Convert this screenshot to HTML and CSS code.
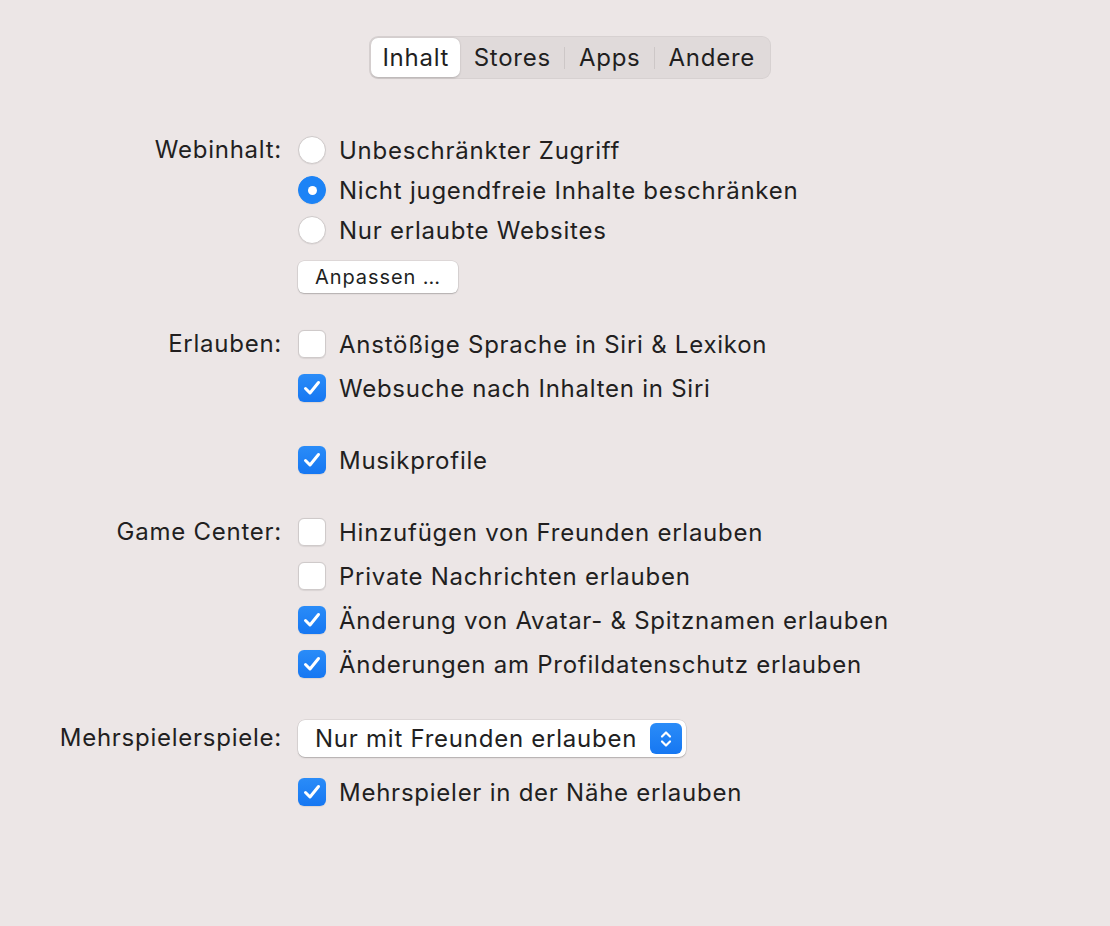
FILE: index.html
```html
<!doctype html>
<html lang="de">
<head>
    <meta charset="UTF-8">
    <title>Bildschirmzeit – Inhalt</title>
    <link rel="stylesheet" href="styles.css">
</head>
<body>
    <div class="tabs">
        <div class="seg">
            <span class="selected">Inhalt</span>
            <span>Stores</span>
            <i class="sep"></i>
            <span>Apps</span>
            <i class="sep"></i>
            <span>Andere</span>
        </div>
    </div>

    <div class="form">
        <!-- Webinhalt -->
        <div class="group web">
            <div class="label">Webinhalt:</div>
            <div class="opts">
                <div class="row r40"><span class="radio"></span>Unbeschränkter Zugriff</div>
                <div class="row r40"><span class="radio on"></span>Nicht jugendfreie Inhalte beschränken</div>
                <div class="row r40"><span class="radio"></span>Nur erlaubte Websites</div>
                <div class="btn">Anpassen …</div>
            </div>
        </div>

        <!-- Erlauben -->
        <div class="group allow">
            <div class="label">Erlauben:</div>
            <div class="opts">
                <div class="row"><span class="check"></span>Anstößige Sprache in Siri &amp; Lexikon</div>
                <div class="row"><span class="check on"><svg viewBox="0 0 28 28"><path d="M7.5 14.5 L12 19 L20.5 8.5"/></svg></span>Websuche nach Inhalten in Siri</div>
                <div class="spacer"></div>
                <div class="row"><span class="check on"><svg viewBox="0 0 28 28"><path d="M7.5 14.5 L12 19 L20.5 8.5"/></svg></span>Musikprofile</div>
            </div>
        </div>

        <!-- Game Center -->
        <div class="group game">
            <div class="label">Game Center:</div>
            <div class="opts">
                <div class="row"><span class="check"></span>Hinzufügen von Freunden erlauben</div>
                <div class="row"><span class="check"></span>Private Nachrichten erlauben</div>
                <div class="row"><span class="check on"><svg viewBox="0 0 28 28"><path d="M7.5 14.5 L12 19 L20.5 8.5"/></svg></span>Änderung von Avatar- &amp; Spitznamen erlauben</div>
                <div class="row"><span class="check on"><svg viewBox="0 0 28 28"><path d="M7.5 14.5 L12 19 L20.5 8.5"/></svg></span>Änderungen am Profildatenschutz erlauben</div>
            </div>
        </div>

        <!-- Mehrspieler -->
        <div class="group multi">
            <div class="label">Mehrspielerspiele:</div>
            <div class="opts">
                <div class="popup">
                    <span>Nur mit Freunden erlauben</span>
                    <span class="stepper">
                        <svg width="14" height="24" viewBox="0 0 14 24">
                            <path d="M3 9.5 L7 5.5 L11 9.5"/>
                            <path d="M3 14.5 L7 18.5 L11 14.5"/>
                        </svg>
                    </span>
                </div>
                <div class="row"><span class="check on"><svg viewBox="0 0 28 28"><path d="M7.5 14.5 L12 19 L20.5 8.5"/></svg></span>Mehrspieler in der Nähe erlauben</div>
            </div>
        </div>
    </div>
</body>
</html>
```

FILE: styles.css
```css
body{
    margin: 0;
    background-color: #ece6e6;
    color: #221f1f;
    font-family: Inter, "Noto Sans", "Liberation Sans", sans-serif;
    font-size: 24px;
    letter-spacing: 0.75px;
    width: 1110px;
    height: 926px;
    overflow: hidden;
}
.tabs{
    display: flex;
    justify-content: center;
    padding-top: 36px;
}
.seg{
    display: flex;
    align-items: center;
    height: 43px;
    padding: 0 2px;
    box-sizing: border-box;
    background-color: #e0dada;
    border-radius: 9px;
    box-shadow: inset 0 0 0 1px rgba(0,0,0,0.04);
    margin-left: 30px;
}
.seg span{
    height: 39px;
    line-height: 39px;
    padding: 0 13.5px;
}
.seg .selected{
    padding: 0 11px;
    background-color: #fff;
    border-radius: 7px;
    box-shadow: 0 0.5px 2px rgba(0,0,0,0.2);
}
.seg .sep{
    width: 1px;
    height: 22px;
    background-color: #cdc7c7;
}
.form{
    padding-top: 51px;
}
.group{
    display: grid;
    grid-template-columns: 282px auto;
    column-gap: 16px;
}
.label{
    text-align: right;
    height: 44px;
    line-height: 44px;
}
.web .label{
    height: 40px;
    line-height: 40px;
}
.row{
    display: flex;
    align-items: center;
    height: 44px;
    white-space: nowrap;
}
.r40{
    height: 40px;
}
.spacer{
    height: 28px;
}
.radio,.check{
    flex: none;
    width: 28px;
    height: 28px;
    margin-right: 13px;
    box-sizing: border-box;
    background-color: #fff;
    border: 1px solid #cfcaca;
    box-shadow: 0 0.5px 1px rgba(0,0,0,0.08);
}
.radio{
    border-radius: 50%;
    position: relative;
}
.check{
    border-radius: 6px;
}
.radio.on{
    background-color: #1c83f6;
    border-color: #1c83f6;
}
.radio.on::after{
    content: "";
    position: absolute;
    left: 8.5px;
    top: 8.5px;
    width: 9px;
    height: 9px;
    border-radius: 50%;
    background-color: #fff;
}
.check.on{
    border: none;
    background: linear-gradient(#2a8cf8, #1677f2);
}
.check svg{
    display: block;
    width: 28px;
    height: 28px;
}
.check path,.stepper path{
    fill: none;
    stroke: #fff;
    stroke-width: 3;
    stroke-linecap: round;
    stroke-linejoin: round;
}
.stepper path{
    stroke-width: 2.2;
}
.btn{
    margin-top: 11px;
    width: 160px;
    height: 32px;
    line-height: 32px;
    text-align: center;
    font-size: 20px;
    letter-spacing: 0.9px;
    background-color: #fff;
    border-radius: 6px;
    box-shadow: 0 0 0 0.5px rgba(0,0,0,0.12), 0 1px 1.5px rgba(0,0,0,0.2);
}
.allow{
    margin-top: 29px;
}
.game{
    margin-top: 28px;
}
.multi{
    margin-top: 32px;
}
.multi .label{
    height: 40px;
    line-height: 40px;
}
.popup{
    margin-top: 2px;
    display: flex;
    align-items: center;
    justify-content: space-between;
    width: 388px;
    height: 37px;
    box-sizing: border-box;
    padding: 0 4px 0 17px;
    background-color: #fff;
    border-radius: 7px;
    box-shadow: 0 0 0 0.5px rgba(0,0,0,0.12), 0 1px 1.5px rgba(0,0,0,0.2);
    margin-bottom: 13px;
}
.stepper{
    display: flex;
    align-items: center;
    justify-content: center;
    width: 32px;
    height: 31px;
    border-radius: 6px;
    background: linear-gradient(#2a8cf8, #1677f2);
}
```
